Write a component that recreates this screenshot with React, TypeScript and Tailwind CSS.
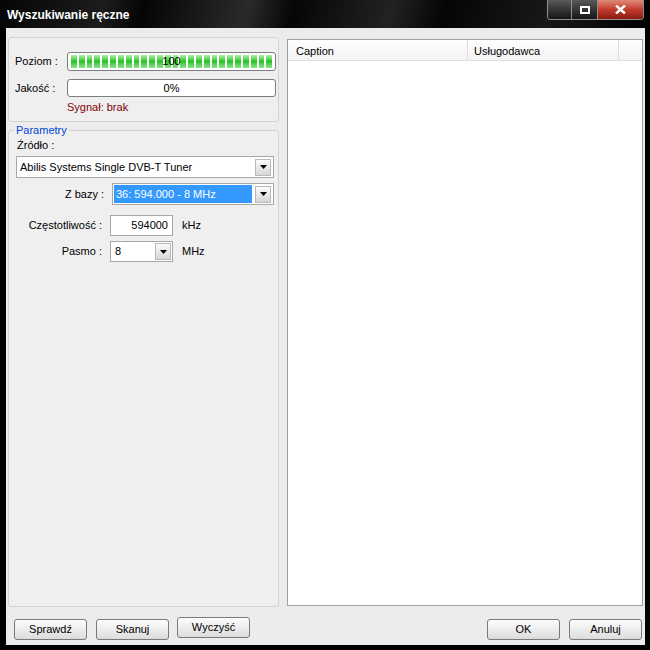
import React from "react";

function Arrow() {
  return (
    <div className="w-[16px] h-[17px] shrink-0 border border-[#b9b9b9] bg-gradient-to-b from-[#fbfbfb] to-[#d6d6d6] flex items-center justify-center">
      <svg width="7" height="4" viewBox="0 0 7 4">
        <path d="M0 0h7L3.5 4z" fill="#000" />
      </svg>
    </div>
  );
}

function Btn({ label, extra = "" }: { label: string; extra?: string }) {
  return (
    <div
      className={`w-[73px] h-[21px] rounded-[3px] border border-[#7a7a7a] bg-gradient-to-b from-[#fdfdfd] to-[#dcdcdc] flex items-center justify-center ${extra}`}
    >
      {label}
    </div>
  );
}

export default function App() {
  const blocks = Array.from({ length: 26 });
  return (
    <div className="w-[650px] h-[650px] bg-black flex flex-col font-['Liberation_Sans',Arial,sans-serif] text-[11px] leading-[13px] text-black">
      {/* Title bar */}
      <div className="h-[28px] flex justify-between items-start bg-[linear-gradient(105deg,#050505_0%,#1c1c1c_16%,#050505_22%,#2a2a2a_38%,#060606_45%,#222_60%,#050505_68%,#181818_84%,#000_100%)]">
        <div className="pl-[7px] pt-[9px] text-white font-bold text-[12px] leading-[13px]">
          Wyszukiwanie ręczne
        </div>
        <div className="mr-[6px] flex h-[20px] border border-t-0 border-[#8e8e8e] rounded-b-[4px] overflow-hidden">
          <div className="w-[24px] bg-gradient-to-b from-[#5a5a5a] to-[#161616] border-r border-[#8e8e8e]" />
          <div className="w-[26px] bg-gradient-to-b from-[#5a5a5a] to-[#161616] border-r border-[#8e8e8e] flex items-center justify-center">
            <div className="w-[10px] h-[8px] border-2 border-white" />
          </div>
          <div className="w-[45px] bg-gradient-to-b from-[#e0897a] via-[#c23a2c] to-[#8c1b12] flex items-center justify-center">
            <svg width="11" height="9" viewBox="0 0 11 9">
              <path d="M1 0.5L10 8.5M10 0.5L1 8.5" stroke="#fff" strokeWidth="2.4" />
            </svg>
          </div>
        </div>
      </div>

      {/* Client */}
      <div className="flex-1 ml-[6px] mr-[5px] mb-[5px] bg-[#ececec] flex flex-col">
        <div className="flex-1 flex pt-[9px] pl-[2px] pr-[2px] gap-[8px]">
          {/* Left column */}
          <div className="w-[271px] flex flex-col">
            <div className="h-[85px] shrink-0 border border-[#d3d3cb] rounded-[3px] bg-[#efefef] pt-[14px] pl-[6px] pr-[2px]">
              <div className="flex items-center h-[19px]">
                <div className="w-[52px]">Poziom :</div>
                <div className="relative flex-1 h-[19px] border border-[#7d7d7d] rounded-[3px] bg-white px-[3px] py-[2px] flex gap-[2px]">
                  {blocks.map((_, i) => (
                    <div
                      key={i}
                      className="flex-1 bg-gradient-to-b from-[#a6f0a6] via-[#1fc41f] to-[#86e486]"
                    />
                  ))}
                  <div className="absolute inset-0 flex items-center justify-center">100</div>
                </div>
              </div>
              <div className="flex items-center h-[18px] mt-[8px]">
                <div className="w-[52px]">Jakość :</div>
                <div className="flex-1 h-[18px] border border-[#7d7d7d] rounded-[3px] bg-white flex items-center justify-center">
                  0%
                </div>
              </div>
              <div className="mt-[4px] pl-[52px] text-[#800000]">Sygnał: brak</div>
            </div>

            <fieldset className="mt-[2px] flex-1 border border-[#d3d3cb] rounded-[3px] bg-[#efefef] pl-[7px] pr-[4px]">
              <legend className="-ml-[2px] px-[2px] text-[#0046d5]">Parametry</legend>
              <div className="mt-[2px] pl-[1px]">Źródło :</div>
              <div className="mt-[4px] h-[22px] border border-[#a7a7a7] bg-white flex items-center pl-[3px] pr-[2px]">
                <div className="flex-1">Abilis Systems Single DVB-T Tuner</div>
                <Arrow />
              </div>
              <div className="mt-[5px] flex items-center">
                <div className="w-[88px] text-right">Z bazy :</div>
                <div className="ml-[8px] flex-1 h-[22px] border border-[#a7a7a7] bg-white flex items-center p-[1px] pr-[2px] gap-[3px]">
                  <div className="flex-1 h-[18px] bg-[#3399ff] text-white flex items-center pl-[2px]">
                    36: 594.000 - 8 MHz
                  </div>
                  <Arrow />
                </div>
              </div>
              <div className="mt-[10px] flex items-center">
                <div className="w-[86px] text-right">Częstotliwość :</div>
                <div className="ml-[8px] w-[63px] h-[21px] border border-[#a7a7a7] bg-white flex items-center justify-end pr-[4px]">
                  594000
                </div>
                <div className="ml-[9px]">kHz</div>
              </div>
              <div className="mt-[5px] flex items-center">
                <div className="w-[86px] text-right">Pasmo :</div>
                <div className="ml-[8px] w-[63px] h-[21px] border border-[#a7a7a7] bg-white flex items-center pl-[4px] pr-[1px]">
                  <div className="flex-1">8</div>
                  <Arrow />
                </div>
                <div className="ml-[9px]">MHz</div>
              </div>
            </fieldset>
          </div>

          {/* List */}
          <div className="flex-1 mt-[2px] mb-[1px] border border-[#a0a0a0] bg-white flex flex-col">
            <div className="h-[21px] flex bg-gradient-to-b from-white to-[#f3f3f3] border-b border-[#dedede]">
              <div className="w-[180px] pl-[8px] pt-[2px] flex items-center border-r border-[#dedede]">Caption</div>
              <div className="w-[151px] pl-[6px] pt-[2px] flex items-center border-r border-[#dedede]">Usługodawca</div>
              <div className="flex-1" />
            </div>
          </div>
        </div>

        {/* Buttons */}
        <div className="h-[38px] flex items-start pt-[12px] pl-[8px] pr-[3px]">
          <Btn label="Sprawdź" />
          <Btn label="Skanuj" extra="ml-[9px]" />
          <Btn label="Wyczyść" extra="ml-[8px] -mt-[2px]" />
          <div className="flex-1" />
          <Btn label="OK" />
          <Btn label="Anuluj" extra="ml-[9px]" />
        </div>
      </div>
    </div>
  );
}
